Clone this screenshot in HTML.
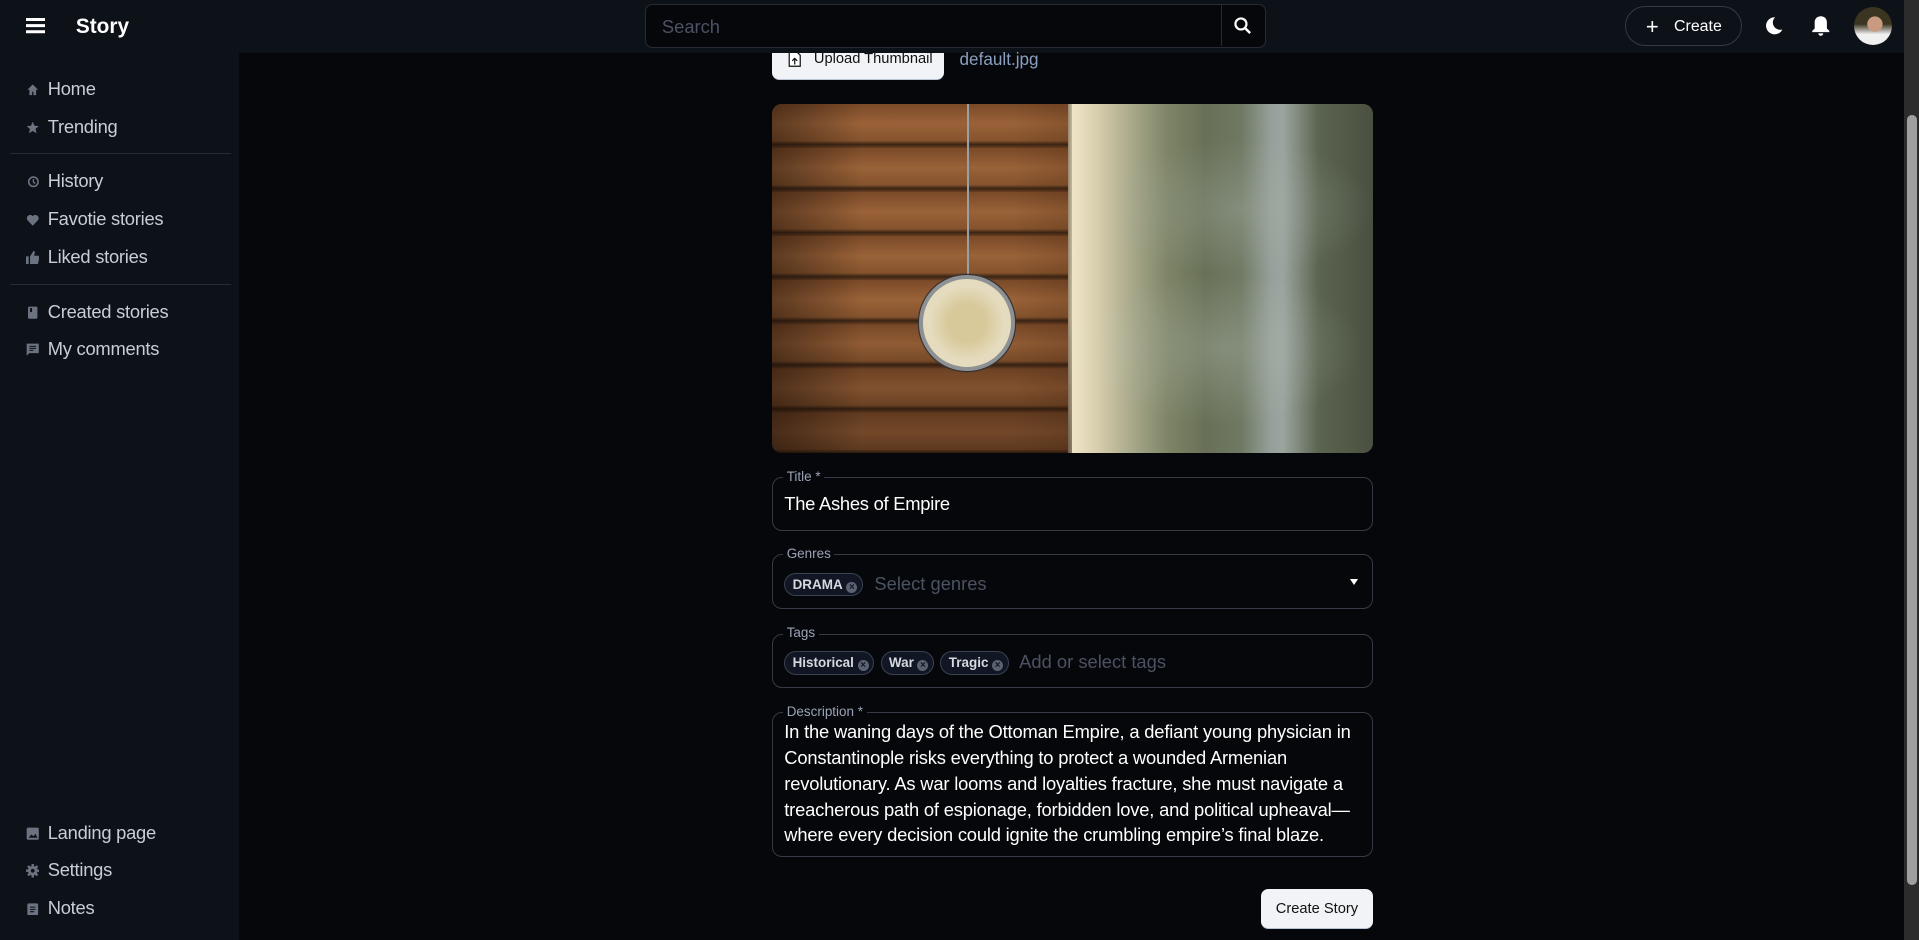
<!DOCTYPE html>
<html><head><meta charset="utf-8"><style>
*{box-sizing:border-box;margin:0;padding:0}
html,body{width:1919px;height:940px;overflow:hidden;background:#06070a}
#w{zoom:1.2239;width:1568px;height:768px;position:relative;font-family:"Liberation Sans",sans-serif;overflow:hidden;background:#06070a}
.top{position:absolute;left:0;top:0;width:1558px;height:43px;background:#0d1118}
.side{position:absolute;left:0;top:43px;width:195px;height:725px;background:#0d1118}
.it{position:absolute;left:39px;font-size:15px;color:#c9ced6;letter-spacing:-.2px}
.ic{position:absolute;left:21px;width:11px;height:11px}
.hr{position:absolute;left:8px;width:181px;height:1px;background:#262b35}
.fld{position:absolute;left:631px;width:491px;border:1px solid #343a46;border-radius:8px}
.lg{position:absolute;left:8px;top:-8px;background:#06070a;padding:0 3px;font-size:11px;color:#9aa3b5}
.chip{display:inline-block;border:1px solid #3a4150;border-radius:10px;background:#101623;color:#d5d9e0;font-size:11px;font-weight:bold;padding:2px 4px 2px 6px;margin-right:5px;vertical-align:middle}
.x{display:inline-block;width:9px;height:9px;border-radius:50%;background:#5b6272;color:#101623;font-size:8px;line-height:9px;text-align:center;margin-left:3px;vertical-align:-1px}
</style></head><body><div id="w">
<div class="top">
 <div style="position:absolute;left:21px;top:15px;width:16px;height:2px;background:#fff;box-shadow:0 5px 0 #fff,0 10px 0 #fff"></div>
 <div style="position:absolute;left:62px;top:12px;font-size:17px;font-weight:bold;color:#fff">Story</div>
 <div style="position:absolute;left:527px;top:3px;width:507px;height:36px;border:1px solid #262b35;border-radius:6px;background:#06070a">
  <div style="position:absolute;left:13px;top:9px;font-size:15px;color:#4b5262">Search</div>
  <div style="position:absolute;left:470px;top:0;width:1px;height:34px;background:#262b35"></div>
  <svg style="position:absolute;left:480px;top:9px" width="16" height="16" viewBox="0 0 16 16"><circle cx="6.5" cy="6.5" r="4.5" fill="none" stroke="#fff" stroke-width="1.8"/><path d="M10 10l4 4" stroke="#fff" stroke-width="2"/></svg>
 </div>
 <div style="position:absolute;left:1328px;top:5px;width:95px;height:33px;border:1px solid #343a46;border-radius:17px;color:#fff;font-size:13px">
  <span style="position:absolute;left:16px;top:7px;font-size:18px;line-height:18px">+</span><span style="position:absolute;left:39px;top:9px">Create</span></div>
 <svg style="position:absolute;left:1441px;top:13px" width="16" height="16" viewBox="0 0 16 16"><path d="M9 1a7 7 0 1 0 6 10A6 6 0 0 1 9 1z" fill="#fff"/></svg>
 <svg style="position:absolute;left:1480px;top:12px" width="16" height="18" viewBox="0 0 16 18"><path d="M8 1c-3 0-5 2-5 5v5l-2 2v1h14v-1l-2-2V6c0-3-2-5-5-5z M6 15h4a2 2 0 0 1-4 0z" fill="#fff"/></svg>
 <div style="position:absolute;left:1515px;top:6px;width:31px;height:31px;border-radius:50%;background:radial-gradient(ellipse at 55% 45%,#c89a80 0 25%,transparent 27%),linear-gradient(#3a3520 0 45%,#f0f0f0 72%);overflow:hidden"></div>
</div>
<div class="side">
 <svg class="ic" style="top:25px" viewBox="0 0 10 10"><path d="M5 1L1 5h1.5v4h2V6.5h1V9h2V5H9z" fill="#6b7280"/></svg><div class="it" style="top:21px">Home</div>
 <svg class="ic" style="top:56px" viewBox="0 0 10 10"><path d="M5 .5l1.3 3 3.2.3-2.4 2.1.7 3.2L5 7.4 2.2 9.1l.7-3.2L.5 3.8l3.2-.3z" fill="#6b7280"/></svg><div class="it" style="top:52px">Trending</div>
 <div class="hr" style="top:82px"></div>
 <svg class="ic" style="top:100px" viewBox="0 0 10 10"><circle cx="5.5" cy="5" r="3.5" fill="none" stroke="#6b7280" stroke-width="1.2"/><path d="M5.5 3v2.3l1.4 1" stroke="#6b7280" fill="none"/></svg><div class="it" style="top:96px">History</div>
 <svg class="ic" style="top:131px" viewBox="0 0 10 10"><path d="M5 9.5L1.2 5.5A2.4 2.4 0 0 1 5 2.3a2.4 2.4 0 0 1 3.8 3.2z" fill="#6b7280"/></svg><div class="it" style="top:127px">Favotie stories</div>
 <svg class="ic" style="top:162px" viewBox="0 0 10 10"><path d="M0 4h2v6H0zM3 4l2.5-4c1 0 1.2.8 1 1.6L6 3.5h3.2c.6 0 .9.5.8 1L9 9.2c-.1.5-.5.8-1 .8H3z" fill="#6b7280"/></svg><div class="it" style="top:158px">Liked stories</div>
 <div class="hr" style="top:189px"></div>
 <svg class="ic" style="top:207px" viewBox="0 0 10 10"><rect x="1.5" y=".5" width="7" height="9" rx="1" fill="#6b7280"/><rect x="3" y="1.5" width="1.5" height="3" fill="#0d1118"/></svg><div class="it" style="top:203px">Created stories</div>
 <svg class="ic" style="top:237px" viewBox="0 0 10 10"><path d="M.5 .5h9v7H2.5L.5 9.5z" fill="#6b7280"/><path d="M2.5 2.5h5M2.5 4h5M2.5 5.5h3" stroke="#0d1118" stroke-width=".8"/></svg><div class="it" style="top:233px">My comments</div>
 <svg class="ic" style="top:633px" viewBox="0 0 10 10"><rect x=".5" y=".5" width="9" height="9" rx="1" fill="#6b7280"/><path d="M2 8l2-2.5 1.5 1.5L7 5l1.5 3z" fill="#0d1118"/></svg><div class="it" style="top:629px">Landing page</div>
 <svg class="ic" style="top:663px" viewBox="0 0 10 10"><circle cx="5" cy="5" r="3.6" fill="#6b7280"/><path d="M5 0v10M0 5h10M1.5 1.5l7 7M8.5 1.5l-7 7" stroke="#6b7280" stroke-width="1.8"/><circle cx="5" cy="5" r="1.4" fill="#0d1118"/></svg><div class="it" style="top:659px">Settings</div>
 <svg class="ic" style="top:694px" viewBox="0 0 10 10"><rect x="1" y="1" width="8" height="9" rx="1" fill="#6b7280"/><path d="M3 3.8h4M3 5.5h4M3 7.2h3" stroke="#0d1118" stroke-width=".8"/></svg><div class="it" style="top:690px">Notes</div>
</div>
<div style="position:absolute;left:631px;top:43px;width:140px;height:22px;overflow:hidden"><div style="position:absolute;top:-13px;left:0;width:140px;height:35px;background:#f1f3f7;border-radius:6px;border-bottom:1px solid #b9c3d6">
 <svg style="position:absolute;left:13px;top:12px" width="11" height="13" viewBox="0 0 11 13"><path d="M1 .5h6l3 3v9H1z" fill="#fff" stroke="#111"/><path d="M5.5 11V6M3.5 8l2-2 2 2" stroke="#111" fill="none"/></svg>
 <span style="position:absolute;left:34px;top:12px;font-size:12px;color:#111">Upload Thumbnail</span></div></div>
<div style="position:absolute;left:784px;top:40px;font-size:14px;color:#8aa0c0">default.jpg</div>
<div style="position:absolute;left:631px;top:85px;width:491px;height:285px;border-radius:8px;overflow:hidden;background:linear-gradient(90deg,#3a2a1a 0%,#3a2a1a 48%,#efe6c8 50%,#d8cfae 54%,#a7a78a 60%,#7d8466 66%,#687057 72%,#6f7862 78%,#95a09a 83%,#9aa59f 85%,#5b6450 91%,#4a5040 100%)">
 <div style="position:absolute;left:0;top:0;width:100%;height:100%;background:radial-gradient(ellipse at 78% 30%,rgba(170,180,170,.35),transparent 20%),radial-gradient(ellipse at 75% 70%,rgba(190,200,190,.3),transparent 22%)"></div>
 <div style="position:absolute;left:0;top:0;width:242px;height:285px;background:repeating-linear-gradient(180deg,#7a4a28 0,#9a6238 16px,#85532d 30px,#3a2414 33px,#6b4023 36px);"></div>
 <div style="position:absolute;left:0;top:0;width:245px;height:285px;background:linear-gradient(90deg,rgba(20,10,5,.45),rgba(0,0,0,0) 30%,rgba(0,0,0,0) 80%,rgba(60,30,10,.2)),linear-gradient(180deg,rgba(0,0,0,0) 60%,rgba(20,10,5,.35))"></div>
 <div style="position:absolute;left:159px;top:0;width:2px;height:150px;background:#9aa0a4"></div>
 <div style="position:absolute;left:120px;top:140px;width:78px;height:78px;border-radius:50%;background:radial-gradient(circle,#d8c99a 0 30%,#e5dcbf 60%);border:4px solid #8d9194;box-shadow:0 0 0 1px #333"></div>
</div>
<div class="fld" style="top:390px;height:44px"><span class="lg">Title *</span><div style="position:absolute;left:9px;top:12px;font-size:15px;color:#fff;letter-spacing:-.2px">The Ashes of Empire</div></div>
<div class="fld" style="top:453px;height:45px"><span class="lg">Genres</span><div style="position:absolute;left:9px;top:14px;font-size:15px;color:#4b5262"><span class="chip">DRAMA<span class="x">×</span></span> Select genres</div>
 <div style="position:absolute;right:12px;top:19px;border:4px solid transparent;border-top:5px solid #fff"></div></div>
<div class="fld" style="top:518px;height:44px"><span class="lg">Tags</span><div style="position:absolute;left:9px;top:13px;font-size:15px;color:#4b5262"><span class="chip">Historical<span class="x">×</span></span><span class="chip">War<span class="x">×</span></span><span class="chip">Tragic<span class="x">×</span></span> Add or select tags</div></div>
<div class="fld" style="top:582px;height:118px"><span class="lg">Description *</span><div style="position:absolute;left:9px;top:5px;width:478px;font-size:15px;line-height:21px;color:#fff;letter-spacing:-.15px">In the waning days of the Ottoman Empire, a defiant young physician in Constantinople risks everything to protect a wounded Armenian revolutionary. As war looms and loyalties fracture, she must navigate a treacherous path of espionage, forbidden love, and political upheaval—where every decision could ignite the crumbling empire’s final blaze.</div></div>
<div style="position:absolute;left:1030px;top:726px;width:92px;height:33px;background:#f1f3f7;border-radius:6px;border-bottom:1px solid #b9c3d6;font-size:12px;color:#111;text-align:center;line-height:33px">Create Story</div>
<div style="position:absolute;left:1556px;top:0;width:12px;height:768px;background:#2c2c2c">
 <div style="position:absolute;left:2px;top:94px;width:8px;height:629px;border-radius:4px;background:#9f9f9f"></div></div>
</div></body></html>
